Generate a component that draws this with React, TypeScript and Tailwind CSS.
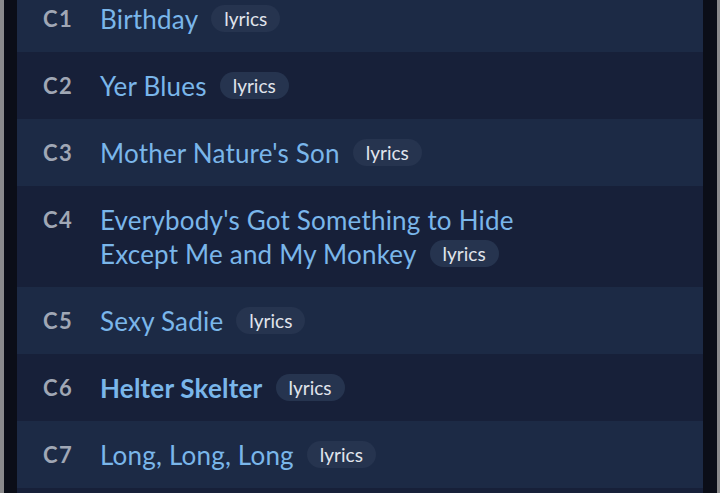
import React from "react";

const tracks: { id: string; title: string; bold?: boolean }[] = [
  { id: "C1", title: "Birthday" },
  { id: "C2", title: "Yer Blues" },
  { id: "C3", title: "Mother Nature's Son" },
  { id: "C4", title: "Everybody's Got Something to Hide Except Me and My Monkey" },
  { id: "C5", title: "Sexy Sadie" },
  { id: "C6", title: "Helter Skelter", bold: true },
  { id: "C7", title: "Long, Long, Long" },
  { id: "C8", title: "Revolution 1" },
];

export default function App() {
  return (
    <div
      className="flex h-[493px] w-[720px] overflow-hidden bg-[#0b0e18]"
      style={{ fontFamily: "Lato, 'Open Sans', sans-serif" }}
    >
      <div className="w-[4px] shrink-0 bg-[#8a8a8c]" />
      <div className="w-[13px] shrink-0" />
      <div className="flex-1 -mt-[15px] flex flex-col">
        {tracks.map((t, i) => (
          <div
            key={t.id}
            className={
              "flex items-start px-[26px] py-[16.5px] " +
              (i % 2 === 0 ? "bg-[#1c2a45]" : "bg-[#172039]")
            }
          >
            <div className="w-[57px] shrink-0 text-[22px] leading-[34px] font-bold tracking-[1.5px] text-[#a0a7b5]">
              {t.id}
            </div>
            <div
              className={
                "text-[26px] leading-[34px] tracking-[0.2px] text-[#7ab6ea] " +
                (t.id === "C4" ? "max-w-[440px] " : "") +
                (t.bold ? "font-bold" : "font-normal")
              }
            >
              {t.title}
              <span className="ml-[13px] inline-block rounded-full bg-[#26344f] px-[13px] align-[3px] text-[19px] leading-[27px] font-normal tracking-normal text-[#e0e4ec]">
                lyrics
              </span>
            </div>
          </div>
        ))}
      </div>
      <div className="w-[14px] shrink-0" />
      <div className="w-[3px] shrink-0 bg-[#8a8a8c]" />
    </div>
  );
}
